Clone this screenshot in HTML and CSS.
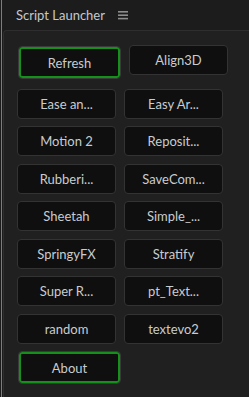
FILE: index.html
```html
<!DOCTYPE html>
<html lang="en">
<head>
    <meta charset="UTF-8">
    <meta name="viewport" content="width=device-width, initial-scale=1.0">
    <title>Script Launcher</title>
    <link rel="stylesheet" href="styles.css">
</head>
<body>
    <div class="frame">
        <div class="header">
            <span class="title">Script Launcher</span>
            <svg class="menu" width="10" height="9" viewBox="0 0 10 9">
                <rect x="0" y="0" width="10" height="1.6" fill="#8c8c8c"/>
                <rect x="0" y="3.4" width="10" height="1.6" fill="#8c8c8c"/>
                <rect x="0" y="6.8" width="10" height="1.6" fill="#8c8c8c"/>
            </svg>
        </div>
        <div class="panel">
            <div class="grid">
                <button class="btn focus">Refresh</button>
                <button class="btn">Align3D</button>
                <button class="btn">Ease an...</button>
                <button class="btn">Easy Ar...</button>
                <button class="btn">Motion 2</button>
                <button class="btn">Reposit...</button>
                <button class="btn">Rubberi...</button>
                <button class="btn">SaveCom...</button>
                <button class="btn">Sheetah</button>
                <button class="btn">Simple_...</button>
                <button class="btn">SpringyFX</button>
                <button class="btn">Stratify</button>
                <button class="btn">Super R...</button>
                <button class="btn">pt_Text...</button>
                <button class="btn">random</button>
                <button class="btn">textevo2</button>
                <button class="btn focus last">About</button>
            </div>
        </div>
    </div>
</body>
</html>
```

FILE: styles.css
```css
html, body {
    margin: 0;
    padding: 0;
    background-color: #1c1c1c;
    overflow: hidden;
}
body {
    font-family: Lato, "Open Sans", sans-serif;
}
.frame {
    margin-left: 1px;
    border-left: 1px solid #4a86d4;
    height: 397px;
}
.header {
    height: 30px;
    display: flex;
    align-items: center;
    padding-left: 14px;
    box-sizing: border-box;
}
.title {
    color: #c4c8cc;
    font-size: 13px;
    margin-top: -1px;
}
.menu {
    margin-left: 13px;
    margin-top: 1px;
}
.panel {
    box-sizing: border-box;
    margin-left: 1px;
    height: 367px;
    background-color: #202020;
    border-top: 1px solid #2e2e2e;
    border-left: 1px solid #2e2e2e;
    border-top-left-radius: 4px;
    padding: 14px 0 0 13px;
}
.grid {
    display: flex;
    flex-wrap: wrap;
    align-items: flex-start;
    width: 213px;
    column-gap: 8px;
    row-gap: 7.5px;
}
.btn {
    box-sizing: border-box;
    width: 99px;
    height: 30px;
    padding: 0;
    background-color: #0f0f0f;
    border: 1px solid #333;
    border-radius: 4px;
    color: #c8ccd0;
    font-family: Lato, "Open Sans", sans-serif;
    font-size: 13px;
    text-align: center;
    cursor: pointer;
}
.btn.focus {
    width: 103px;
    height: 33px;
    margin: 1px 0 2px 1px;
    border-color: #3a3a3a;
    box-shadow: inset 0 0 0 2px #15901a;
}
.btn.last {
    margin-top: 0;
}
```
